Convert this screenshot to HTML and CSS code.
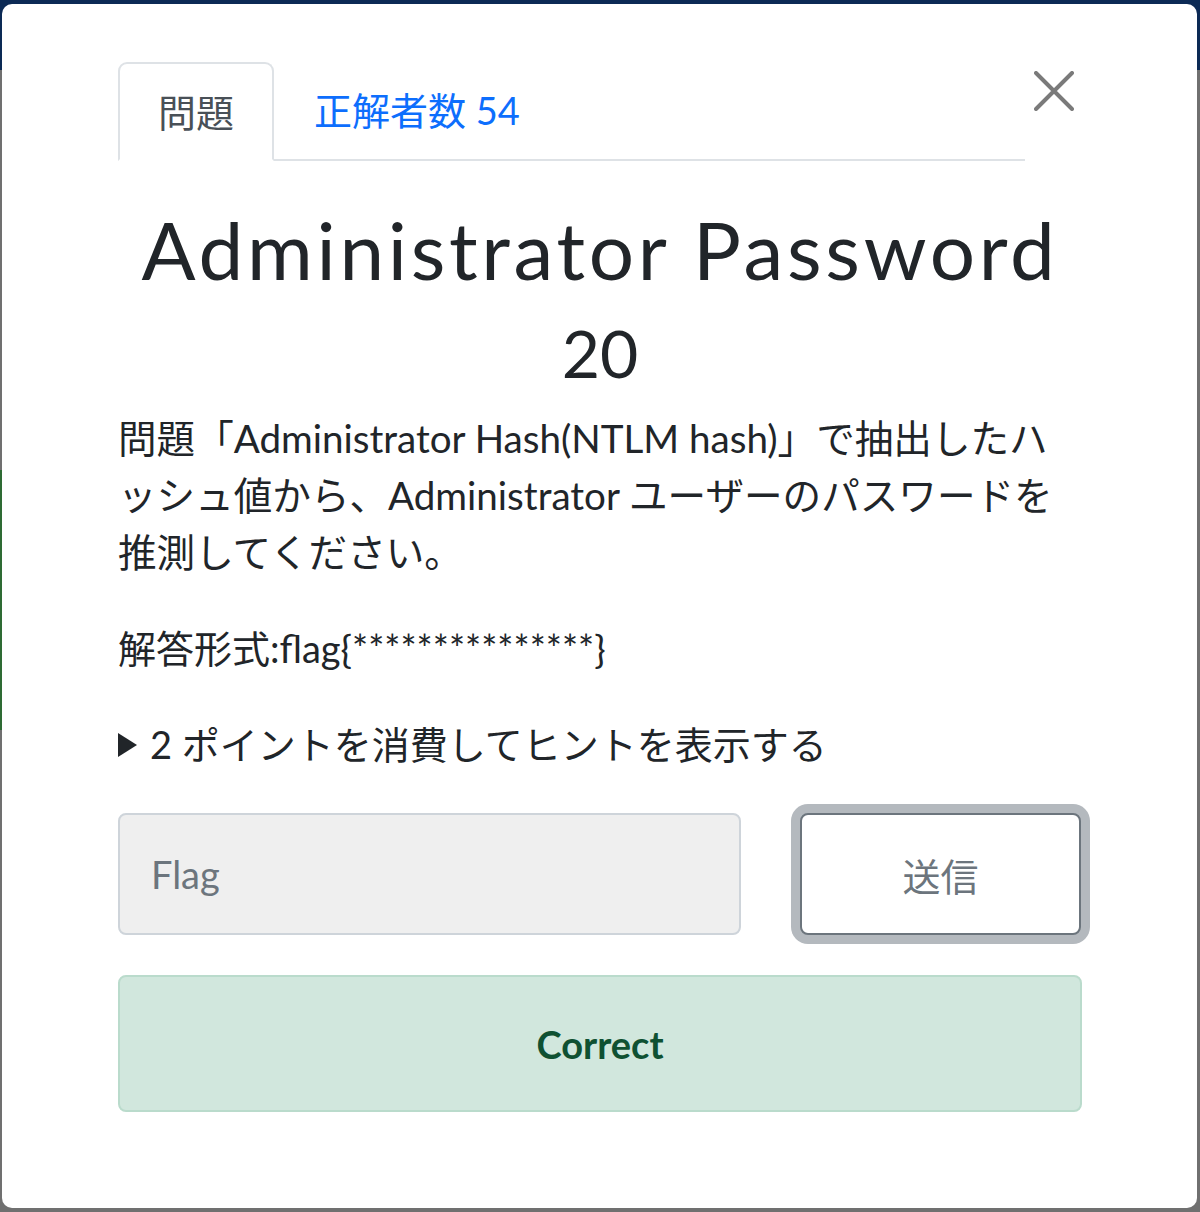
FILE: index.html
```html
<!DOCTYPE html>
<html lang="ja">
<head>
<meta charset="utf-8">
<title>Administrator Password</title>
<link rel="stylesheet" href="styles.css">
</head>
<body>
<div class="modal">
  <div class="modal-head">
    <nav class="tabs">
      <span class="tab active">問題</span>
      <a class="tab link" href="#">正解者数 54</a>
    </nav>
    <button class="close" aria-label="Close">
      <svg width="40" height="40" viewBox="0 0 40 40"><path d="M2 2 L38 38 M38 2 L2 38" stroke="#7a7a7a" stroke-width="4" stroke-linecap="round" fill="none"/></svg>
    </button>
  </div>
  <h2 class="title">Administrator Password</h2>
  <div class="points">20</div>
  <div class="desc">
    <p>問題「Administrator Hash(NTLM hash)」で抽出したハッシュ値から、Administrator ユーザーのパスワードを推測してください。</p>
    <p class="format">解答形式:flag{***************}</p>
  </div>
  <div class="hint"><span class="tri"></span>2 ポイントを消費してヒントを表示する</div>
  <div class="submit-row">
    <input class="flag" type="text" placeholder="Flag">
    <button class="send">送信</button>
  </div>
  <div class="alert">Correct</div>
</div>
</body>
</html>
```
FILE: styles.css
```css
html, body {
  margin: 0;
  padding: 0;
}
body {
  width: 1200px;
  height: 1212px;
  overflow: hidden;
  background:
    linear-gradient(#0c2a55, #0c2a55) 0 0 / 1200px 70px no-repeat,
    linear-gradient(#2e6b34, #2e6b34) 0 470px / 3px 260px no-repeat,
    #707070;
  font-family: Lato, "Noto Sans CJK JP", sans-serif;
  color: #212529;
  padding: 4px 3px 4px 2px;
  box-sizing: border-box;
}
.modal {
  background: #fff;
  border-radius: 10px;
  height: 1204px;
  box-sizing: border-box;
  padding: 58px 115px 0 116px;
}
.modal-head {
  display: flex;
  align-items: flex-start;
}
.tabs {
  flex: 1;
  display: flex;
  border-bottom: 2px solid #dee2e6;
  height: 99px;
  box-sizing: border-box;
}
.tab {
  font-size: 38px;
  line-height: 1;
  padding: 29px 40px 0 40px;
  height: 99px;
  box-sizing: border-box;
  text-decoration: none;
}
.tab.active {
  color: #495057;
  border: 2px solid #dee2e6;
  border-bottom: 2px solid #fff;
  border-radius: 9px 9px 0 0;
  background: #fff;
  padding-left: 38px;
  padding-right: 38px;
}
.link {
  color: #0d6efd;
}
.close {
  width: 57px;
  height: 60px;
  border: none;
  background: none;
  padding: 9px 0 0 0;
  margin: 0;
  display: flex;
  align-items: flex-start;
  justify-content: center;
}
.title {
  font-weight: 400;
  font-size: 80px;
  letter-spacing: 3.7px;
  text-align: center;
  margin: 33px 0 0;
  line-height: 110px;
}
.points {
  text-align: center;
  font-size: 66px;
  line-height: 100px;
  margin-top: -1px;
}
.desc {
  font-size: 38.6px;
  line-height: 57px;
  margin-top: 7px;
}
.desc p {
  margin: 0 0 39px;
}
.desc .format {
  font-size: 38px;
}
.hint {
  font-size: 38px;
  line-height: 57px;
  display: flex;
  align-items: center;
}
.tri {
  width: 0;
  height: 0;
  border-top: 12px solid transparent;
  border-bottom: 12px solid transparent;
  border-left: 19px solid #212529;
  margin-right: 13px;
}
.submit-row {
  display: flex;
  gap: 59px;
  margin-top: 40px;
}
.flag {
  width: 623px;
  height: 122px;
  box-sizing: border-box;
  background: #efefef;
  border: 2px solid #ced4da;
  border-radius: 8px;
  font-family: Lato, "Noto Sans CJK JP", sans-serif;
  font-size: 38px;
  padding: 0 31px;
  color: #495057;
}
.flag::placeholder {
  color: #6c757d;
}
.send {
  width: 281px;
  height: 122px;
  box-sizing: border-box;
  background: #fff;
  border: 2px solid #6c757d;
  border-radius: 8px;
  box-shadow: 0 0 0 9px #b4b9be;
  font-family: Lato, "Noto Sans CJK JP", sans-serif;
  font-size: 38px;
  color: #6c757d;
}
.alert {
  margin-top: 40px;
  height: 137px;
  box-sizing: border-box;
  background: #d1e7dd;
  border: 2px solid #badbcc;
  border-radius: 8px;
  color: #0f5132;
  font-weight: 700;
  font-size: 38px;
  display: flex;
  align-items: center;
  justify-content: center;
}
```
